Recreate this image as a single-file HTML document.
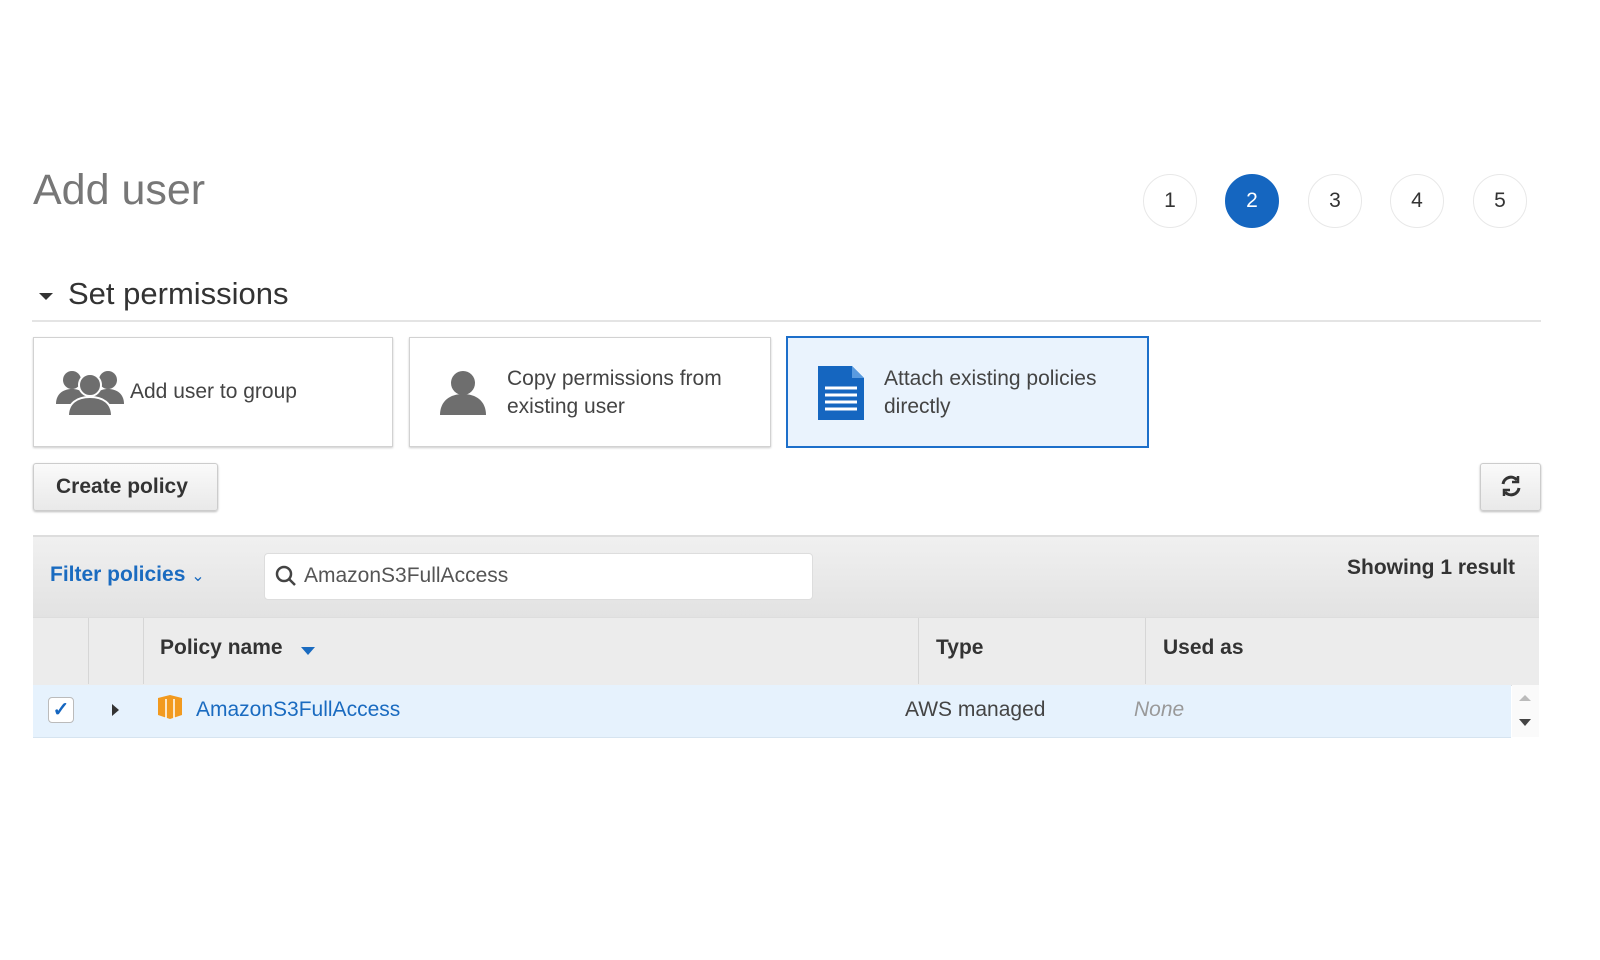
<!DOCTYPE html><html><head><style>
body{margin:0;width:1600px;height:960px;background:#fff;font-family:"Liberation Sans",sans-serif;position:relative;overflow:hidden}
.a{position:absolute}
.c{position:absolute;width:52px;height:52px;border-radius:50%;border:1px solid #e8e8e8;top:174px;text-align:center;line-height:52px;font-size:21px;color:#333}
.card{position:absolute;top:337px;height:108px;border:1px solid #d2d2d2;box-shadow:0 1px 2px #ccc;background:#fff}
.t{font-size:21px;color:#444;line-height:28px}
.btn{position:absolute;top:463px;height:46px;border:1px solid #ccc;border-radius:3px;background:linear-gradient(#fafafa,#e9e9e9);box-shadow:0 1px 2px #bbb}
</style></head><body>
<div class="a" style="left:33px;top:166px;font-size:43px;color:#777">Add user</div>
<div class="c" style="left:1143px">1</div>
<div class="c" style="left:1225px;background:#1566c0;border-color:#1566c0;color:#fff">2</div>
<div class="c" style="left:1308px">3</div>
<div class="c" style="left:1390px">4</div>
<div class="c" style="left:1473px">5</div>
<div class="a" style="left:39px;top:293px;width:0;height:0;border-left:7px solid transparent;border-right:7px solid transparent;border-top:7px solid #333"></div>
<div class="a" style="left:68px;top:276px;font-size:31px;color:#333">Set permissions</div>
<div class="a" style="left:32px;top:320px;width:1509px;height:2px;background:#e4e4e4"></div>

<div class="card" style="left:33px;width:358px">
<svg class="a" style="left:20px;top:30px" width="72" height="50" viewBox="0 0 72 50"><g fill="#6e6e6e"><circle cx="18" cy="12" r="9"/><circle cx="54" cy="12" r="9"/><path d="M2 36c0-10 7-15 16-15s16 5 16 15z"/><path d="M38 36c0-10 7-15 16-15s16 5 16 15z"/><circle cx="36" cy="17" r="11" stroke="#fff" stroke-width="2"/><path d="M14 48c0-13 9-19 22-19s22 6 22 19z" stroke="#fff" stroke-width="2"/></g></svg>
<div class="a t" style="left:96px;top:40px">Add user to group</div></div>
<div class="card" style="left:409px;width:360px">
<svg class="a" style="left:28px;top:30px" width="50" height="50" viewBox="0 0 50 50"><g fill="#6e6e6e"><circle cx="25" cy="15" r="12"/><path d="M2 47c0-14 10-21 23-21s23 7 23 21z"/></g></svg>
<div class="a t" style="left:97px;top:27px">Copy permissions from<br>existing user</div></div>
<div class="card" style="left:786px;width:359px;border:2px solid #1d6fca;background:#eaf3fd;box-shadow:none;top:336px">
<svg class="a" style="left:28px;top:26px" width="50" height="58" viewBox="0 0 50 58"><path d="M2 2h34l12 12v42H2z" fill="#1566c0"/><path d="M36 2v12h12" fill="#5a9be0"/><g stroke="#fff" stroke-width="3"><path d="M9 24h32M9 31h32M9 38h32M9 45h32"/></g></svg>
<div class="a t" style="left:96px;top:27px">Attach existing policies<br>directly</div></div>

<div class="btn" style="left:33px;width:183px"><div class="a" style="left:22px;top:11px;font-size:21px;font-weight:bold;color:#333">Create policy</div></div>
<div class="btn" style="left:1480px;width:59px"><svg class="a" style="left:18px;top:10px" width="24" height="24" viewBox="0 0 24 24" fill="none" stroke="#333" stroke-width="3"><path d="M4 10a8 8 0 0 1 14-4"/><path d="M20 14a8 8 0 0 1-14 4"/><path d="M19 2v6h-6M5 22v-6h6" stroke-width="2.5"/></svg></div>

<div class="a" style="left:33px;top:535px;width:1506px;height:82px;background:linear-gradient(#f0f0f0,#e2e2e2);border-top:2px solid #ddd"></div>
<div class="a" style="left:50px;top:563px;font-size:21px;font-weight:bold;color:#1a6bc0">Filter policies <span style="font-weight:normal;font-size:16px">&#8964;</span></div>
<div class="a" style="left:264px;top:553px;width:547px;height:45px;background:#fff;border:1px solid #ddd;border-radius:4px"></div>
<svg class="a" style="left:274px;top:564px" width="24" height="24" viewBox="0 0 24 24" fill="none" stroke="#444" stroke-width="2.5"><circle cx="10" cy="10" r="7"/><path d="M15 15l6 6"/></svg>
<div class="a" style="left:304px;top:564px;font-size:21px;color:#555">AmazonS3FullAccess</div>
<div class="a" style="left:1347px;top:556px;font-size:21px;font-weight:bold;color:#333">Showing 1 result</div>

<div class="a" style="left:33px;top:617px;width:1506px;height:67px;background:#ececec;border-top:1px solid #ddd;border-bottom:1px solid #ddd"></div>
<div class="a" style="left:88px;top:618px;width:1px;height:66px;background:#d6d6d6"></div>
<div class="a" style="left:143px;top:618px;width:1px;height:66px;background:#d6d6d6"></div>
<div class="a" style="left:918px;top:618px;width:1px;height:66px;background:#d6d6d6"></div>
<div class="a" style="left:1145px;top:618px;width:1px;height:66px;background:#d6d6d6"></div>
<div class="a" style="left:160px;top:636px;font-size:21px;font-weight:bold;color:#333">Policy name</div>
<div class="a" style="left:301px;top:647px;width:0;height:0;border-left:7px solid transparent;border-right:7px solid transparent;border-top:8px solid #1a6bc0"></div>
<div class="a" style="left:936px;top:636px;font-size:21px;font-weight:bold;color:#333">Type</div>
<div class="a" style="left:1163px;top:636px;font-size:21px;font-weight:bold;color:#333">Used as</div>

<div class="a" style="left:33px;top:685px;width:1478px;height:52px;background:#e6f2fd;border-bottom:1px solid #d6e4f0"></div>
<div class="a" style="left:48px;top:697px;width:24px;height:24px;background:#fff;border:1px solid #bbb;border-radius:4px;color:#1566c0;font-size:20px;line-height:24px;text-align:center;font-weight:bold">✓</div>
<div class="a" style="left:112px;top:704px;width:0;height:0;border-top:6px solid transparent;border-bottom:6px solid transparent;border-left:7px solid #333"></div>
<svg class="a" style="left:156px;top:694px" width="28" height="26" viewBox="0 0 28 26"><path d="M2 4l12-3 12 3v17l-12 4-12-4z" fill="#f29a1f"/><path d="M10 5v19M18 5v19" stroke="#fff" stroke-width="1.5"/></svg>
<div class="a" style="left:196px;top:698px;font-size:21px;color:#1a6bc0">AmazonS3FullAccess</div>
<div class="a" style="left:905px;top:698px;font-size:21px;color:#444">AWS managed</div>
<div class="a" style="left:1134px;top:698px;font-size:21px;color:#999;font-style:italic">None</div>
<div class="a" style="left:1512px;top:685px;width:27px;height:52px;background:#fafafa"></div>
<div class="a" style="left:1519px;top:695px;width:0;height:0;border-left:6px solid transparent;border-right:6px solid transparent;border-bottom:6px solid #bbb"></div>
<div class="a" style="left:1519px;top:719px;width:0;height:0;border-left:6px solid transparent;border-right:6px solid transparent;border-top:7px solid #444"></div>
</body></html>
